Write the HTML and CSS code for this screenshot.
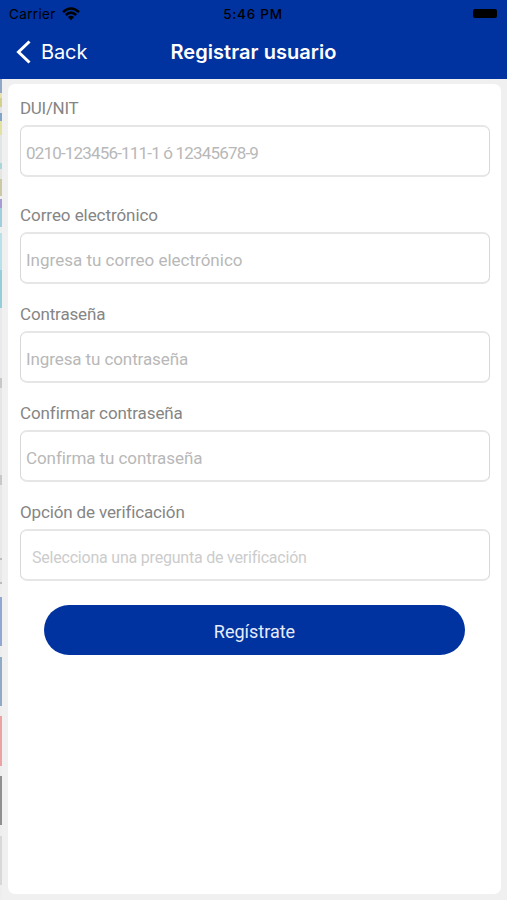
FILE: index.html
```html
<!DOCTYPE html>
<html lang="es">
<head>
<meta charset="utf-8">
<title>Registrar usuario</title>
<link rel="stylesheet" href="styles.css">
</head>
<body>
<header class="header">
  <div class="status">
    <div class="carrier"><span>Carrier</span>
      <svg width="18" height="14" viewBox="0 0 18 14" fill="none" stroke="#000" stroke-width="2.6"><path d="M1 5.1Q9-2.1 17 5.1M3.8 8Q9 3.4 14.2 8"/><path d="M9 13.2L5.9 10.1Q9 7.5 12.1 10.1Z" fill="#000" stroke="none"/></svg>
    </div>
    <div class="time">5:46 PM</div>
    <div class="power"><span class="battery"></span></div>
  </div>
  <nav class="nav">
    <a class="back"><svg width="16" height="24" viewBox="0 0 16 24" fill="none" stroke="#fff" stroke-width="3"><path d="M13.5 1.5L2.5 12L13.5 22.5"/></svg><span>Back</span></a>
    <h1 class="title">Registrar usuario</h1>
  </nav>
</header>
<main class="page">
  <div class="edge"></div>
  <form class="card">
    <div class="group first"><label class="l1" for="dui">DUI/NIT</label><input class="p1" id="dui" placeholder="0210-123456-111-1 ó 12345678-9"></div>
    <div class="group"><label class="l2" for="mail">Correo electrónico</label><input class="p2" id="mail" placeholder="Ingresa tu correo electrónico"></div>
    <div class="group"><label class="l3" for="pass">Contraseña</label><input class="p3" id="pass" placeholder="Ingresa tu contraseña"></div>
    <div class="group"><label class="l4" for="again">Confirmar contraseña</label><input class="p4" id="again" placeholder="Confirma tu contraseña"></div>
    <div class="group"><label class="l5" for="question">Opción de verificación</label><input class="p5" id="question" placeholder="Selecciona una pregunta de verificación"></div>
    <button class="submit" type="button">Regístrate</button>
  </form>
</main>
</body>
</html>
```
FILE: styles.css
```css
* { box-sizing: border-box; }
body { margin: 0; height: 900px; overflow: hidden; display: flex; flex-direction: column; background: #f0f0f0; font-family: Roboto, "Liberation Sans", sans-serif; }
.header { flex: none; height: 79px; background: #0032a0; font-family: Inter, "Liberation Sans", sans-serif; }
.status { height: 27px; padding: 0 10px 0 9px; display: grid; grid-template-columns: 1fr auto 1fr; align-items: center; color: #000; font-size: 13.5px; }
.carrier { display: flex; align-items: center; gap: 6px; letter-spacing: .35px; }
.time { font-weight: 500; letter-spacing: .75px; }
.power { display: flex; justify-content: flex-end; }
.battery { width: 24px; height: 9px; border-radius: 2px; background: #000; }
.nav { height: 50px; padding: 0 16px; display: grid; grid-template-columns: 1fr auto 1fr; align-items: center; color: #fff; }
.back { display: flex; align-items: center; gap: 9px; font-size: 20px; letter-spacing: -.1px; }
.title { margin: 0; font-size: 20px; font-weight: 600; letter-spacing: .05px; }
.page { flex: 1; min-height: 0; display: flex; padding: 5px 6px 6px 0; background: #f0f0f0; }
.edge { width: 2px; height: 821px; margin: -5px 6px 0 0; flex: none; background: linear-gradient(#91a7c8 0 14px, #e4e3b0 14px 19px, #d5cf8d 19px 28px, #e0e4e8 28px 34px, #80a5c7 34px 42px, #e1e29f 42px 56px, #e2e5e5 56px 84px, #a6d8da 84px 90px, #e5e5e2 90px 100px, #cbc9a5 100px 117px, #eeeeee 117px 120px, #a89dd2 120px 129px, #9fcfdd 129px 148px, #eceff0 148px 154px, #b8e0e8 154px 191px, #94cedb 191px 229px, #e9e9ec 229px 299px, #c8c8c8 299px 309px, #e6e6e6 309px 396px, #c8c8c8 396px 406px, #e8e8e8 406px 479px, #bbb 479px 481px, #e8e8e8 481px 503px, #bbb 503px 505px, #eee 505px 518px, #91a7d2 518px 567px, #eee 567px 578px, #8faac5 578px 627px, #eee 627px 637px, #eca2a2 637px 687px, #eee 687px 697px, #909090 697px 746px, #eee 746px 757px, #d8d8d8 757px 806px, #eee 806px); }
.card { flex: 1; min-width: 0; padding: 13px 11px 0 12px; background: #fff; border-radius: 7px; display: flex; flex-direction: column; }
.group { flex: none; height: 99px; display: flex; flex-direction: column; }
.group.first { height: 107px; }
label { flex: none; height: 28px; line-height: 22px; font-size: 17px; color: #858585; white-space: nowrap; }
input { width: 470px; height: 52px; border: 1.5px solid #dedede; border-width: 2px 1px; border-color: #e6e6e6 #d8d8d8; border-radius: 7px; padding: 4px 5px 0; font: 17px Roboto, sans-serif; background: #fff; }
input::placeholder { color: #b8b8b8; opacity: 1; }
.l1 { letter-spacing: -.3px; }
.l2 { letter-spacing: -.06px; }
.l3 { letter-spacing: -.15px; }
.l4 { letter-spacing: -.1px; }
.l5 { letter-spacing: -.14px; }
.p1 { letter-spacing: -.82px; }
.p3 { letter-spacing: -.1px; }
.p4 { letter-spacing: -.08px; }
.p5 { padding-left: 11px; font-size: 16px; letter-spacing: -.21px; }
.p5::placeholder { color: #ccc; }
.submit { flex: none; width: 421px; height: 50px; margin: 5px 0 0 24px; padding: 2px 0 0; border: 0; border-radius: 25px; background: #0032a0; color: #e6ecfa; font: 18px Roboto, sans-serif; }
```
